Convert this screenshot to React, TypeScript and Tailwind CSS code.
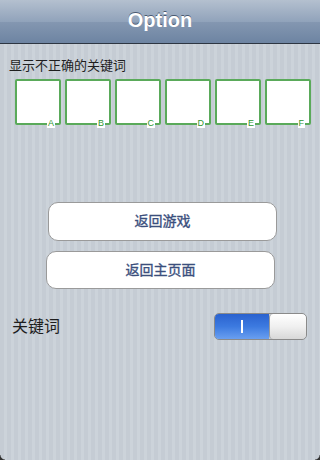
import React from "react";

const cjk = { fontFamily: '"Liberation Sans", "Noto Sans CJK SC", sans-serif' };

export default function App() {
  const letters = ["A", "B", "C", "D", "E", "F"];
  return (
    <div
      className="relative w-[320px] h-[460px] overflow-hidden bg-[repeating-linear-gradient(90deg,#c5ccd4_0px,#c5ccd4_4px,#ccd3da_4px,#ccd3da_7px)]"
      style={cjk}
    >
      <div className="h-[44px] pb-[3px] flex items-center justify-center border-b border-[#2d3642] bg-[linear-gradient(180deg,#b4c0cf_0%,#91a3bb_50%,#8497b1_51%,#6d84a2_100%)]">
        <span className="text-white font-bold text-[20px] leading-none [text-shadow:0_-1px_0_#4a5a72]">
          Option
        </span>
      </div>

      <div className="pl-[9px] pt-[14px] text-[13px] leading-[16px] text-[#1e1e1e]">
        显示不正确的关键词
      </div>

      <div className="flex gap-[4px] pl-[15px] mt-[5px]">
        {letters.map((l) => (
          <div
            key={l}
            className="relative w-[46px] h-[46px] bg-white border-2 border-[#5aaa5a] rounded-[2px]"
          >
            <span className="absolute right-[4px] bottom-[-5px] px-[1px] bg-white text-[9px] leading-[10px] text-[#2f962f]">
              {l}
            </span>
          </div>
        ))}
      </div>

      <div className="flex flex-col mt-[77px]">
        <div className="ml-[48px] w-[229px] h-[39px] bg-white border border-[#9a9a9a] rounded-[10px] flex items-center justify-center text-[14px] text-[#3b4f7d] [-webkit-text-stroke:0.35px_#3b4f7d]">
          返回游戏
        </div>
        <div className="ml-[46px] mt-[10px] w-[229px] h-[38px] bg-white border border-[#9a9a9a] rounded-[10px] flex items-center justify-center text-[14px] text-[#3b4f7d] [-webkit-text-stroke:0.35px_#3b4f7d]">
          返回主页面
        </div>
      </div>

      <div className="flex items-center justify-between mt-[24px] pl-[12px] pr-[13px]">
        <span className="text-[16px] text-[#1e1e1e] leading-[20px]">关键词</span>
        <div className="w-[93px] h-[27px] rounded-[5px] border border-[#8a8a8a] overflow-hidden flex">
          <div className="w-[54px] h-full flex items-center justify-center bg-[linear-gradient(180deg,#2a62cf_0%,#3c7ae0_50%,#6a9ff0_100%)]">
            <div className="w-[2px] h-[13px] bg-white" />
          </div>
          <div className="flex-1 h-full rounded-[4px] border-l border-[#9a9a9a] bg-[linear-gradient(180deg,#ffffff_0%,#f0f0f0_50%,#d8d8d8_100%)]" />
        </div>
      </div>

      <div className="absolute left-0 bottom-0 w-[5px] h-[5px] bg-[radial-gradient(circle_at_100%_0%,transparent_4px,#333_5px)]" />
      <div className="absolute right-0 bottom-0 w-[5px] h-[5px] bg-[radial-gradient(circle_at_0%_0%,transparent_4px,#333_5px)]" />
    </div>
  );
}
